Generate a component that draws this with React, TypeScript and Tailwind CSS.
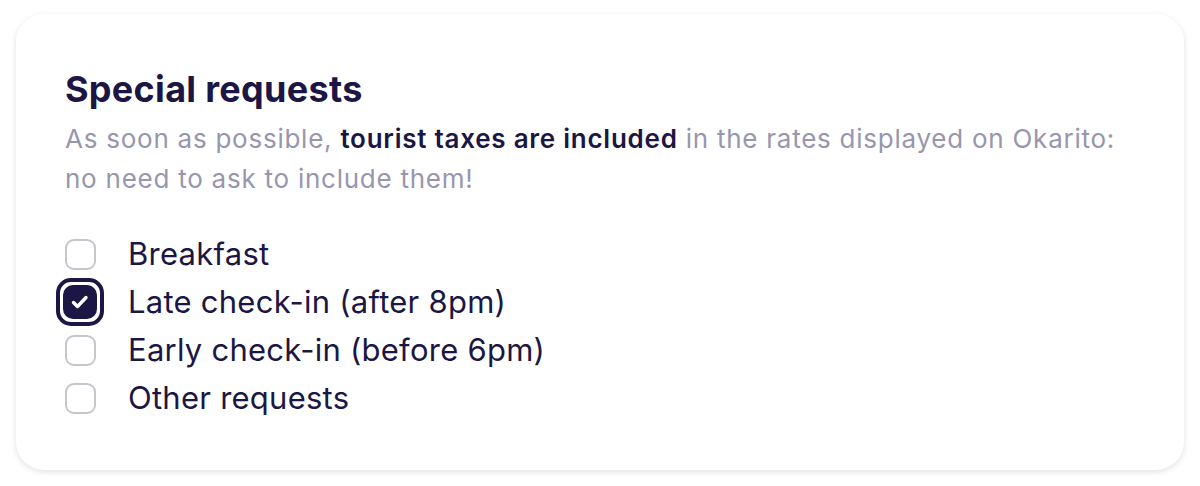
import React, { FC, useState } from "react";

const items = [
  { label: "Breakfast", checked: false },
  { label: "Late check-in (after 8pm)", checked: true },
  { label: "Early check-in (before 6pm)", checked: false },
  { label: "Other requests", checked: false },
];

const Box: FC<{ checked: boolean }> = ({ checked }) => {
  if (checked) {
    return (
      <span className="flex h-[48px] w-[48px] items-center justify-center rounded-[15px] border-4 border-[#1c1644]">
        <span className="flex h-[34px] w-[34px] items-center justify-center rounded-[10px] bg-[#1c1644]">
          <svg width="34" height="34" viewBox="0 0 34 34" fill="none">
            <path d="M10.5 17.5l4 4 8.5-9" stroke="white" strokeWidth="3.4" strokeLinecap="round" strokeLinejoin="round" />
          </svg>
        </span>
      </span>
    );
  }
  return (
    <span className="flex h-[48px] w-[48px] items-center justify-center">
      <span className="h-[31px] w-[31px] rounded-[9px] border-2 border-[#c6c5cd]" />
    </span>
  );
};

const App: FC = () => {
  const [list, setList] = useState(items);
  return (
    <div className="h-[486px] w-[1200px] bg-white px-4 pt-[14px] font-['Inter',sans-serif]">
      <div className="h-[456px] rounded-[28px] bg-white pl-[49px] pt-[55px] shadow-[0_2px_6px_rgba(20,20,40,0.12)]">
        {/* header */}
        <h2 className="text-[36px] font-bold leading-[40px] tracking-[0.3px] text-[#1c1644]">Special requests</h2>
        <p className="mt-[10px] w-[1080px] text-[26px] leading-[40px] tracking-[0.75px] text-[#9896ae]">
          As soon as possible, <span className="font-semibold text-[#1c1644]">tourist taxes are included</span> in the rates displayed on Okarito: no need to ask to include them!
        </p>
        {/* options */}
        <div className="mt-[31px] flex flex-col">
          {list.map((it, i) => (
            <label
              key={it.label}
              className="flex h-[48px] cursor-pointer items-center"
              onClick={() => setList(list.map((x, j) => (j === i ? { ...x, checked: !x.checked } : x)))}
            >
              <span className="-ml-[9px]">
                <Box checked={it.checked} />
              </span>
              <span className="ml-[24px] text-[31px] tracking-[0.25px] text-[#1c1644]">{it.label}</span>
            </label>
          ))}
        </div>
      </div>
    </div>
  );
};

export default App;
